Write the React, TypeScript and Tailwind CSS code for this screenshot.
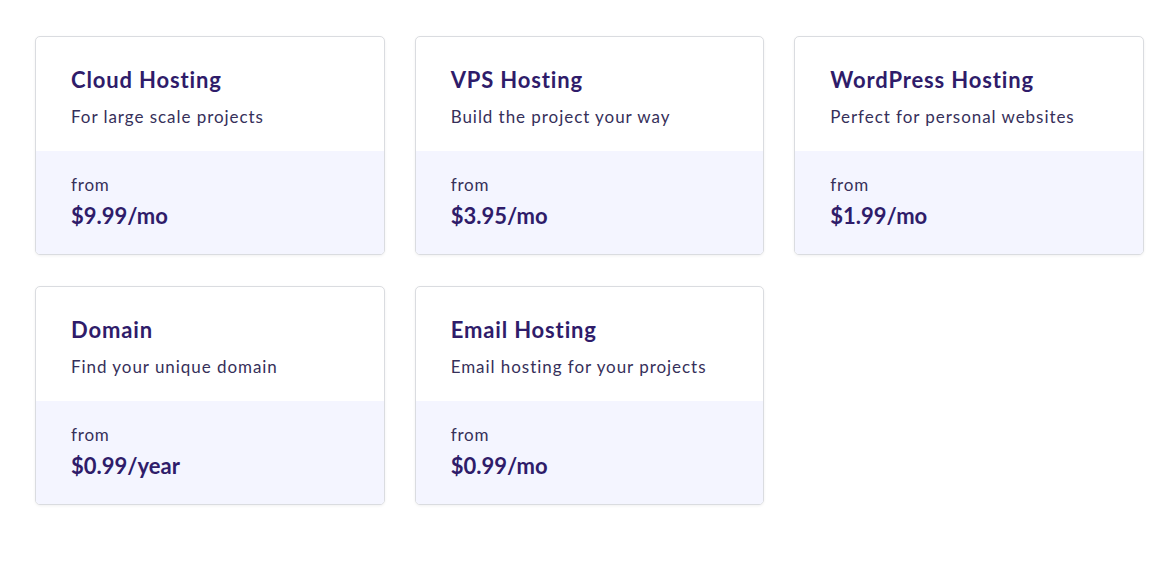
import React from "react";

const plans = [
  { title: "Cloud Hosting", desc: "For large scale projects", price: "$9.99/mo" },
  { title: "VPS Hosting", desc: "Build the project your way", price: "$3.95/mo" },
  { title: "WordPress Hosting", desc: "Perfect for personal websites", price: "$1.99/mo" },
  { title: "Domain", desc: "Find your unique domain", price: "$0.99/year" },
  { title: "Email Hosting", desc: "Email hosting for your projects", price: "$0.99/mo" },
];

function PlanCard({ title, desc, price }: { title: string; desc: string; price: string }) {
  return (
    <div className="flex flex-col overflow-hidden rounded-[5px] border border-[#dadce0] bg-white shadow-[0_1px_3px_rgba(0,0,0,0.06)]">
      <div className="px-[35px] pt-[29px] pb-[22px]">
        <h3 className="text-[22px] leading-[28px] font-bold tracking-[0.85px] text-[#2f1c6a]">{title}</h3>
        <p className="mt-[11px] text-[17px] leading-[24px] tracking-[0.95px] text-[#36305a]">{desc}</p>
      </div>
      <div className="bg-[#f4f5ff] px-[35px] pt-[22px] pb-[24px]">
        <p className="text-[17px] leading-[24px] tracking-[0.8px] text-[#36305a]">from</p>
        <p className="mt-[5px] text-[22px] leading-[28px] font-bold text-[#2f1c6a]">{price}</p>
      </div>
    </div>
  );
}

export default function App() {
  return (
    <div className="min-h-screen bg-white pt-[36px] pl-[35px]" style={{ fontFamily: "Lato, 'Noto Sans', sans-serif" }}>
      <div className="grid w-[1109px] grid-cols-3 gap-x-[30px] gap-y-[31px]">
        {plans.map((p) => (
          <PlanCard key={p.title} {...p} />
        ))}
      </div>
    </div>
  );
}
